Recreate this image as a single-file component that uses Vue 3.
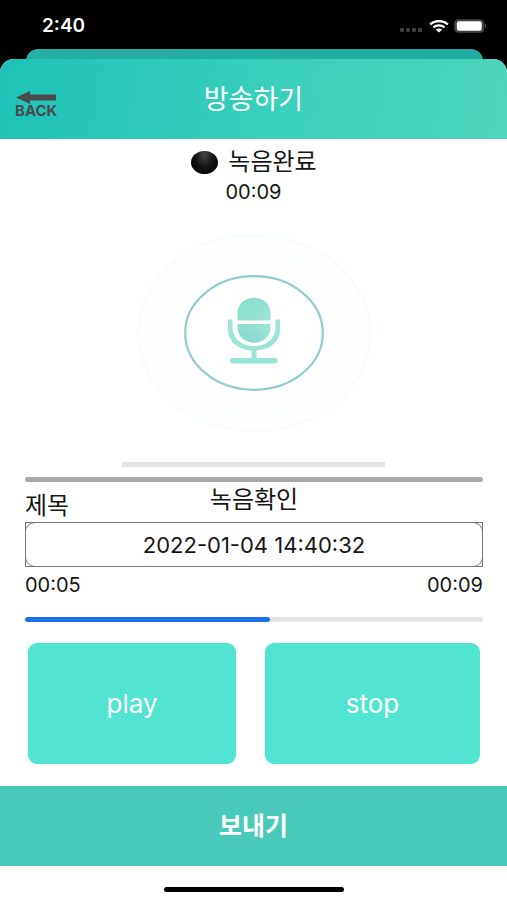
<script setup>
import { ref } from 'vue'

const title = ref('2022-01-04 14:40:32')
const elapsed = ref('00:05')
const total = ref('00:09')
const position = ref(53.4)
const level = ref(0)
</script>

<template>
  <div class="phone">
    <div class="status-bar">
      <time class="clock">2:40</time>
      <div class="indicators">
        <svg class="signal" width="24" height="4" viewBox="0 0 24 4" aria-hidden="true">
          <g fill="#404040">
            <rect x="0" width="4" height="4" rx="1" />
            <rect x="6" width="4" height="4" rx="1" />
            <rect x="12" width="4" height="4" rx="1" />
            <rect x="18" width="4" height="4" rx="1" />
          </g>
        </svg>
        <svg width="20" height="13" viewBox="0 0 20 13" aria-hidden="true">
          <g fill="none" stroke="#fff" stroke-width="2.3">
            <path d="M1.1 4.3C6 -.1 14 -.1 18.9 4.3" />
            <path d="M4.4 7.4C7.4 4.7 12.6 4.7 15.6 7.4" />
          </g>
          <path d="M6.8 9.6C8.7 8 11.3 8 13.2 9.6L10 12.6Z" fill="#fff" />
        </svg>
        <svg width="33" height="14" viewBox="0 0 33 14" aria-hidden="true">
          <rect x="1" y="1" width="28.5" height="12" rx="3.5" fill="#333" stroke="#484848" stroke-width="1.6" />
          <rect x="2.8" y="2.3" width="25" height="9.400" rx="2" fill="#fff" />
          <path d="M31 4.8Q33 7 31 9.2Z" fill="#666" />
        </svg>
      </div>
    </div>
    <div class="behind"></div>

    <main class="sheet">
      <header class="header">
        <a class="back" href="#" aria-label="BACK">
          <svg width="40" height="13" viewBox="0 0 40 13" aria-hidden="true">
            <path d="M0 6.5L14 0V3.5H40V9.5H14V13Z" fill="#484b4b" />
          </svg>
          <span>BACK</span>
        </a>
        <h1>방송하기</h1>
      </header>

      <section class="recorder">
        <p class="state"><span class="dot"></span>녹음완료</p>
        <p class="time">00:09</p>
        <button class="mic" type="button" aria-label="녹음">
          <svg width="240" height="200" viewBox="0 0 240 200" aria-hidden="true">
            <defs>
              <linearGradient id="mic-fill" x1="0" y1="1" x2="1" y2="0">
                <stop offset="0" stop-color="#85d5d2" />
                <stop offset="1" stop-color="#9ce8d3" />
              </linearGradient>
              <linearGradient id="mic-head" x1="0" y1="0" x2="1" y2="1">
                <stop offset="0" stop-color="#83ddca" />
                <stop offset="1" stop-color="#9fe5d9" />
              </linearGradient>
            </defs>
            <ellipse cx="120" cy="100" rx="116" ry="98" fill="#fdfefe" stroke="#f9fcfc" stroke-width="3" />
            <ellipse cx="120" cy="100" rx="94" ry="79" fill="#fefefe" stroke="#fbfdfd" stroke-width="2" />
            <ellipse cx="120" cy="100" rx="68.8" ry="56.8" fill="#fff" stroke="#92cbd0" stroke-width="2.2" />
            <path d="M103.500 87.500V80C103.500 59.500 136.500 59.500 136.500 80V87.500Z" fill="url(#mic-head)" />
            <path d="M103.500 91H136.500V94C136.500 115 103.500 115 103.500 94Z" fill="url(#mic-fill)" />
            <path d="M94 86.500H98.500V94C98.500 119.500 141.500 119.500 141.500 94V86.500H146V96C146 109 136 116.500 122.500 117.500V125H141.500Q143.500 125 143.500 127.500Q143.500 130.500 141.500 130.500H98Q96 130.500 96 127.500Q96 125 98 125H117.500V117.500C104 116.500 94 109 94 96Z" fill="#9ae5d8" />
          </svg>
        </button>
        <progress class="level" :value="level" max="100" aria-label="녹음완료"></progress>
      </section>

      <section class="review">
        <hr class="divider" />
        <div class="review-head">
          <label for="title">제목</label>
          <h2>녹음확인</h2>
        </div>
        <div class="field">
          <input id="title" v-model="title" type="text" />
        </div>
        <div class="times"><span>{{ elapsed }}</span><span>{{ total }}</span></div>
        <progress class="playback" :value="position" max="100" aria-label="녹음확인"></progress>
        <div class="controls">
          <button type="button">play</button>
          <button type="button">stop</button>
        </div>
      </section>

      <button class="send" type="button">보내기</button>
      <div class="home"><span></span></div>
    </main>
  </div>
</template>

<style>
body {
  margin: 0;
  background: #000;
}
</style>

<style scoped>
* {
  box-sizing: border-box;
}
.phone {
  min-height: 100vh;
  display: flex;
  flex-direction: column;
  background: #000;
  color: #161616;
  font-family: Inter, "Noto Sans CJK KR", sans-serif;
}
h1, h2, p, hr {
  margin: 0;
}
button, input {
  font: inherit;
  border: 0;
  padding: 0;
}
.status-bar {
  height: 49px;
  display: flex;
  justify-content: space-between;
  align-items: center;
  padding: 3px 20px 0 42px;
}
.clock {
  color: #fff;
  font-size: 19px;
  line-height: 24px;
  font-weight: 600;
}
.indicators {
  display: flex;
  align-items: center;
  gap: 5px;
}
.signal {
  align-self: flex-end;
  margin-bottom: 1px;
}
.behind {
  height: 24px;
  margin: 0 24px -14px 26px;
  border-radius: 12px 12px 0 0;
  background: linear-gradient(90deg, #27aea2, #20ada0);
}
.sheet {
  flex: 1;
  display: flex;
  flex-direction: column;
  overflow: hidden;
  border-radius: 14px 14px 0 0;
  background: #fff;
}
.header {
  height: 80px;
  display: grid;
  grid-template-columns: 1fr auto 1fr;
  align-items: center;
  padding: 2px 15px 0;
  background: linear-gradient(100deg, #1dc2b7, #3fd2bb 65%, #4dd6bb);
}
.header h1 {
  color: #fff;
  font-size: 27px;
  line-height: 36px;
  font-weight: 400;
}
.back {
  justify-self: start;
  display: flex;
  flex-direction: column;
  align-items: center;
  gap: 1px;
  padding-top: 8px;
  color: #484b4b;
  font-size: 15px;
  line-height: 12px;
  font-weight: 700;
  text-decoration: none;
}
.recorder {
  display: flex;
  flex-direction: column;
  align-items: center;
  padding-top: 6px;
}
.state {
  display: flex;
  align-items: center;
  gap: 10px;
  padding-left: 1px;
  font-size: 24px;
  line-height: 34px;
}
.dot {
  width: 27px;
  height: 23px;
  border-radius: 50%;
  background: radial-gradient(ellipse at 50% 15%, #444, #111 50%, #000);
}
.time {
  font-size: 20px;
  line-height: 26px;
}
.mic {
  margin-top: 28px;
  background: none;
}
.mic svg {
  display: block;
}
progress {
  display: block;
  appearance: none;
  border: 0;
  height: 5px;
  border-radius: 3px;
  overflow: hidden;
  background: #e3e3e3;
}
progress::-webkit-progress-bar {
  background: #e3e3e3;
}
progress::-webkit-progress-value {
  background: #1c72eb;
  border-radius: 3px;
}
.level {
  width: 52%;
  margin-top: 29px;
  border-radius: 0;
}
.review {
  padding: 10px 24px 22px 25px;
}
.divider {
  height: 5px;
  border: 0;
  border-radius: 3px;
  background: #a8a8a8;
}
.review-head {
  display: grid;
  grid-template-columns: 1fr auto 1fr;
  height: 40px;
  font-size: 24px;
  line-height: 32px;
}
.review-head label {
  align-self: end;
}
.review-head h2 {
  padding-top: 2px;
  font-size: 24px;
  font-weight: 400;
}
.field {
  height: 45px;
  overflow: hidden;
  border: 1px solid #777;
}
.field input {
  display: block;
  width: 100%;
  height: 100%;
  border-radius: 9px;
  box-shadow: 0 0 0 1px #999;
  background: #fff;
  color: #161616;
  font-size: 22px;
  text-align: center;
}
.times {
  display: flex;
  justify-content: space-between;
  padding-top: 4px;
  font-size: 20px;
  line-height: 28px;
}
.playback {
  width: 100%;
  margin-top: 18px;
}
.controls {
  display: grid;
  grid-template-columns: 208fr 215fr;
  gap: 29px;
  padding: 21px 3px 0;
}
.controls button {
  height: 121px;
  border-radius: 9px;
  background: #51e5d1;
  color: #fff;
  font-size: 26px;
}
.send {
  height: 80px;
  padding-bottom: 4px;
  background: #49c9b9;
  color: #fff;
  font-size: 25px;
  font-weight: 700;
}
.home {
  flex: 1;
  min-height: 34px;
  display: flex;
  justify-content: center;
  align-items: flex-end;
  padding-bottom: 8px;
}
.home span {
  width: 180px;
  height: 5px;
  border-radius: 3px;
  background: #000;
}
</style>
